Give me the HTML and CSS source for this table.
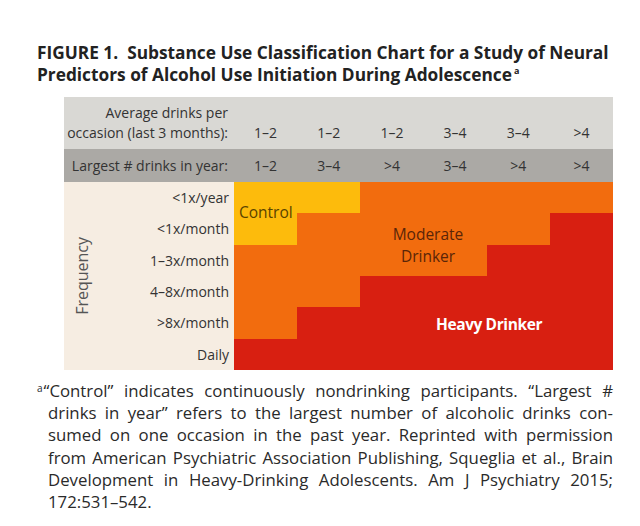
FILE: index.html
```html
<!DOCTYPE html>
<html>
<head>
<meta charset="utf-8">
<link rel="stylesheet" href="styles.css">
</head>
<body>
<div class="page">
  <h1 class="title">FIGURE 1.&nbsp; Substance Use Classification Chart for a Study of Neural Predictors of Alcohol Use Initiation During Adolescence<sup>a</sup></h1>
  <div class="chart">
    <div class="hrow hd1">
      <div class="hlabel">Average drinks per<br>occasion (last 3 months):</div>
      <div class="hv">1–2</div><div class="hv">1–2</div><div class="hv">1–2</div><div class="hv">3–4</div><div class="hv">3–4</div><div class="hv">&gt;4</div>
    </div>
    <div class="hrow hd2">
      <div class="hlabel">Largest # drinks in year:</div>
      <div class="hv">1–2</div><div class="hv">3–4</div><div class="hv">&gt;4</div><div class="hv">3–4</div><div class="hv">&gt;4</div><div class="hv">&gt;4</div>
    </div>
    <div class="body">
      <div class="freq"><span>Frequency</span></div>
      <div class="grid">
        <div class="rl">&lt;1x/year</div>
        <div class="y"></div><div class="y"></div><div class="o"></div><div class="o"></div><div class="o"></div><div class="o"></div>
        <div class="rl">&lt;1x/month</div>
        <div class="y"></div><div class="o"></div><div class="o"></div><div class="o"></div><div class="o"></div><div class="r"></div>
        <div class="rl">1–3x/month</div>
        <div class="o"></div><div class="o"></div><div class="o"></div><div class="o"></div><div class="r"></div><div class="r"></div>
        <div class="rl">4–8x/month</div>
        <div class="o"></div><div class="o"></div><div class="r"></div><div class="r"></div><div class="r"></div><div class="r"></div>
        <div class="rl">&gt;8x/month</div>
        <div class="o"></div><div class="r"></div><div class="r"></div><div class="r"></div><div class="r"></div><div class="r"></div>
        <div class="rl">Daily</div>
        <div class="r"></div><div class="r"></div><div class="r"></div><div class="r"></div><div class="r"></div><div class="r"></div>
      </div>
      <div class="lab lab-control">Control</div>
      <div class="lab lab-moderate">Moderate<br>Drinker</div>
      <div class="lab lab-heavy">Heavy Drinker</div>
    </div>
  </div>
  <p class="note">
    <span class="ln"><sup>a</sup>“Control” indicates continuously nondrinking participants. “Largest #</span>
    <span class="ln">drinks in year” refers to the largest number of alcoholic drinks con-</span>
    <span class="ln">sumed on one occasion in the past year. Reprinted with permission</span>
    <span class="ln">from American Psychiatric Association Publishing, Squeglia et al., Brain</span>
    <span class="ln">Development in Heavy-Drinking Adolescents. Am J Psychiatry 2015;</span>
    <span class="ln last">172:531–542.</span>
  </p>
</div>
</body>
</html>
```
FILE: styles.css
```css
html, body {
  margin: 0;
  padding: 0;
  background: #ffffff;
}
.page {
  width: 576px;
  padding: 42px 27px 0 37px;
  font-family: "Open Sans", "DejaVu Sans", sans-serif;
  color: #2a2a2a;
}
.title {
  margin: 0 0 11px 0;
  font-size: 17.3px;
  line-height: 22px;
  font-weight: 700;
  color: #222;
}
.title sup {
  font-size: 9px;
  line-height: 0;
  vertical-align: 7px;
  margin-left: 2px;
}
.chart {
  margin-left: 27px;
  font-size: 14px;
  color: #333;
}
.hrow {
  display: grid;
  grid-template-columns: 170px repeat(6, 1fr);
}
.hd1 {
  height: 52px;
  background: #d9d8d4;
  align-items: end;
  padding-bottom: 6px;
  box-sizing: border-box;
  line-height: 20px;
}
.hd2 {
  height: 33px;
  background: #aba9a5;
  align-items: center;
}
.hlabel {
  text-align: right;
  padding-right: 6px;
}
.hv {
  text-align: center;
}
.body {
  position: relative;
  display: flex;
  background: #f6ede2;
}
.freq {
  width: 36px;
  display: flex;
  align-items: center;
  justify-content: center;
  color: #555;
  font-size: 16px;
}
.freq span {
  writing-mode: vertical-rl;
  transform: rotate(180deg);
  margin-top: 0;
}
.grid {
  flex: 1;
  display: grid;
  grid-template-columns: 134px repeat(6, 1fr);
  grid-template-rows: repeat(6, 31.33px);
}
.rl {
  display: flex;
  align-items: center;
  justify-content: flex-end;
  padding-right: 5px;
}
.y { background: #fdbb0c; }
.o { background: #f26c0e; }
.r { background: #d81f11; }
.lab {
  position: absolute;
  line-height: 22px;
  font-size: 15.5px;
}
.lab-control {
  left: 175px;
  top: 19px;
  color: #5a4300;
}
.lab-moderate {
  left: 304px;
  width: 120px;
  top: 41px;
  text-align: center;
  color: #5a2508;
}
.lab-heavy {
  left: 345px;
  width: 160px;
  top: 131px;
  text-align: center;
  color: #fff;
  font-weight: 700;
  font-size: 15.5px;
  letter-spacing: -0.4px;
}
.note {
  margin: 10px 0 0 0;
  font-size: 16.8px;
  line-height: 22.2px;
  color: #2a2a2a;
}
.ln {
  display: block;
  padding-left: 11px;
  text-align: justify;
  text-align-last: justify;
  white-space: nowrap;
}
.ln:first-child {
  padding-left: 0;
}
.ln.last {
  text-align-last: left;
}
.note sup {
  font-size: 10px;
  line-height: 0;
  vertical-align: 5px;
  margin-right: 1px;
}
```
